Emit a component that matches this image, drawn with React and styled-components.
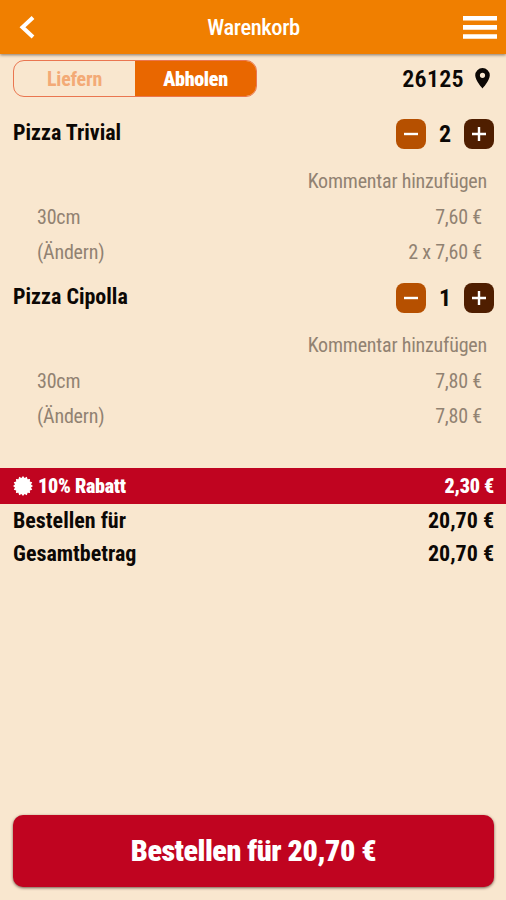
import styled, { createGlobalStyle } from "styled-components";

const GlobalStyle = createGlobalStyle`
  * {
    box-sizing: border-box;
  }
  body {
    margin: 0;
    background: #f9e7cf;
  }
  button {
    border: 0;
    padding: 0;
    font: inherit;
    cursor: pointer;
  }
`;

// styles
const Screen = styled.div`
  display: flex;
  flex-direction: column;
  height: 900px;
  background: #f9e7cf;
  color: #0c0805;
  font-family: "Roboto Condensed", Roboto, sans-serif;
  font-stretch: 75%;
  font-size: 22px;
  line-height: 1;
`;

const Text = styled.span`
  display: block;
  white-space: nowrap;
  font-size: ${(props) => props.$size || 22}px;
  font-weight: ${(props) => props.$weight || 700};
  letter-spacing: ${(props) => props.$spacing || 0}px;
`;

const Header = styled.header`
  display: grid;
  grid-template-columns: 60px 1fr 68px;
  align-items: center;
  height: 54px;
  flex: none;
  padding: 0 9px 0 18px;
  background: #f07f00;
  color: #fff;
  box-shadow: 0 1px 3px rgba(60, 40, 30, 0.6);
  text-align: center;
`;

const IconButton = styled.button`
  display: flex;
  justify-content: ${(props) => props.$align};
  background: none;
  color: inherit;
`;

const Toolbar = styled.div`
  display: flex;
  justify-content: space-between;
  align-items: center;
  height: 37px;
  margin: 6px 16px 0 13px;
  flex: none;
`;

const Toggle = styled.div`
  display: flex;
  width: 244px;
  height: 37px;
  overflow: hidden;
  border: 1px solid #ea7650;
  border-radius: 11px;
`;

const ToggleOption = styled.button`
  display: flex;
  align-items: center;
  justify-content: center;
  width: 50%;
  background: ${(props) => (props.$active ? "#e96700" : "transparent")};
  color: ${(props) => (props.$active ? "#fff" : "#f3aa76")};
`;

const Place = styled.div`
  display: flex;
  align-items: center;
  gap: 11px;
`;

const Cart = styled.main`
  height: 371px;
  padding-top: 18px;
  flex: none;
`;

const CartItem = styled.section`
  height: 164px;
`;

const ItemHead = styled.div`
  display: flex;
  justify-content: space-between;
  align-items: center;
  height: 38px;
  padding: 0 12px 0 13px;
`;

const ItemName = styled.h2`
  margin: 0 0 2px;
  font-size: 22px;
  font-weight: 700;
`;

const Stepper = styled.div`
  display: grid;
  grid-template-columns: 30px 38px 30px;
  align-items: center;
  height: 30px;
  text-align: center;
`;

const StepButton = styled.button`
  display: flex;
  align-items: center;
  justify-content: center;
  width: 30px;
  height: 30px;
  border-radius: 8px;
  background: ${(props) => props.$color};
  color: #fff;
`;

const Comment = styled.div`
  display: flex;
  justify-content: flex-end;
  align-items: center;
  height: 55px;
  padding-right: 19px;
  color: #918272;
`;

const Detail = styled.div`
  display: flex;
  justify-content: space-between;
  align-items: center;
  height: 35.5px;
  padding: 0 24px 18px 37px;
  color: #918272;
`;

const Discount = styled.div`
  display: flex;
  align-items: center;
  justify-content: space-between;
  height: 36px;
  padding: 0 12px 0 13px;
  flex: none;
  background: #c00420;
  color: #fff;
`;

const Badge = styled.div`
  display: flex;
  align-items: center;
  gap: 5px;
`;

const Total = styled.div`
  display: flex;
  align-items: center;
  justify-content: space-between;
  height: 33px;
  padding: 0 12px 0 13px;
  flex: none;
`;

const OrderButton = styled.button`
  display: flex;
  align-items: center;
  justify-content: center;
  height: 72px;
  flex: none;
  margin: auto 12px 13px 13px;
  border-radius: 10px;
  background: #c00420;
  color: #fff;
  box-shadow: 0 1px 3px rgba(60, 30, 20, 0.7);
`;

const BackIcon = () => (
  <svg width="18" height="24" viewBox="0 0 18 24">
    <path d="M15 2.5 4.5 12.3 15 22" fill="none" stroke="#fff" strokeWidth="4" />
  </svg>
);

const MenuIcon = () => (
  <svg width="34" height="24" viewBox="0 0 34 24">
    <path d="M0 3.3h34M0 12.4h34M0 21.5h34" stroke="#fff" strokeWidth="4.6" />
  </svg>
);

const PinIcon = () => (
  <svg width="15" height="21" viewBox="0 0 15 21">
    <path
      fillRule="evenodd"
      d="M7.5 0A7.3 7.3 0 0 0 .2 7.3C.2 12.5 7.5 20.5 7.5 20.5s7.3-8 7.3-13.2A7.3 7.3 0 0 0 7.5 0Zm0 4.7a2.6 2.6 0 1 1 0 5.2 2.6 2.6 0 0 1 0-5.2Z"
      fill="#0c0805"
    />
  </svg>
);

const starPoints = Array.from({ length: 32 }, (_, i) => {
  const r = i % 2 ? 8.2 : 10;
  const a = (i * Math.PI) / 16;
  return `${10 + r * Math.sin(a)},${10 - r * Math.cos(a)}`;
}).join(" ");

const StarIcon = () => (
  <svg width="20" height="20" viewBox="0 0 20 20">
    <polygon points={starPoints} fill="#fff" />
  </svg>
);

const StepIcon = ({ plus }) => (
  <svg width="14" height="14" viewBox="0 0 14 14">
    <path d={plus ? "M0 7h14M7 0v14" : "M0 7h14"} stroke="#fff" strokeWidth="2.4" />
  </svg>
);

const DetailText = ({ children }) => (
  <Text $weight={400} $size={20} $spacing={-0.2}>
    {children}
  </Text>
);

const items = [
  { name: "Pizza Trivial", count: 2, price: "7,60 €", sum: "2 x 7,60 €" },
  { name: "Pizza Cipolla", count: 1, price: "7,80 €", sum: "7,80 €" },
];

const App = () => {
  return (
    <Screen>
      <GlobalStyle />
      <Header>
        <IconButton $align="flex-start" aria-label="Zurück">
          <BackIcon />
        </IconButton>
        <Text $weight={500} $size={22.5} $spacing={-0.4}>
          Warenkorb
        </Text>
        <IconButton $align="flex-end" aria-label="Menü">
          <MenuIcon />
        </IconButton>
      </Header>
      <Toolbar>
        <Toggle>
          <ToggleOption>
            <Text $size={20} $spacing={-0.2}>
              Liefern
            </Text>
          </ToggleOption>
          <ToggleOption $active>
            <Text $size={20} $weight={900} $spacing={-0.3}>
              Abholen
            </Text>
          </ToggleOption>
        </Toggle>
        <Place>
          <Text $size={24} $weight={600} $spacing={0.3}>
            26125
          </Text>
          <PinIcon />
        </Place>
      </Toolbar>
      <Cart>
        {items.map((item) => (
          <CartItem key={item.name}>
            <ItemHead>
              <ItemName>{item.name}</ItemName>
              <Stepper>
                <StepButton $color="#b65000">
                  <StepIcon />
                </StepButton>
                <Text $size={24}>{item.count}</Text>
                <StepButton $color="#4f1e00">
                  <StepIcon plus />
                </StepButton>
              </Stepper>
            </ItemHead>
            <Comment>
              <DetailText>Kommentar hinzufügen</DetailText>
            </Comment>
            <Detail>
              <DetailText>30cm</DetailText>
              <DetailText>{item.price}</DetailText>
            </Detail>
            <Detail>
              <DetailText>(Ändern)</DetailText>
              <DetailText>{item.sum}</DetailText>
            </Detail>
          </CartItem>
        ))}
      </Cart>
      <Discount>
        <Badge>
          <StarIcon />
          <Text $size={20} $weight={900} $spacing={-0.25}>
            10% Rabatt
          </Text>
        </Badge>
        <Text $size={20} $weight={900} $spacing={-0.25}>
          2,30 €
        </Text>
      </Discount>
      <Total>
        <Text>Bestellen für</Text>
        <Text>20,70 €</Text>
      </Total>
      <Total>
        <Text>Gesamtbetrag</Text>
        <Text>20,70 €</Text>
      </Total>
      <OrderButton>
        <Text $size={30} $weight={900} $spacing={-0.45}>
          Bestellen für 20,70 €
        </Text>
      </OrderButton>
    </Screen>
  );
};

export default App;
